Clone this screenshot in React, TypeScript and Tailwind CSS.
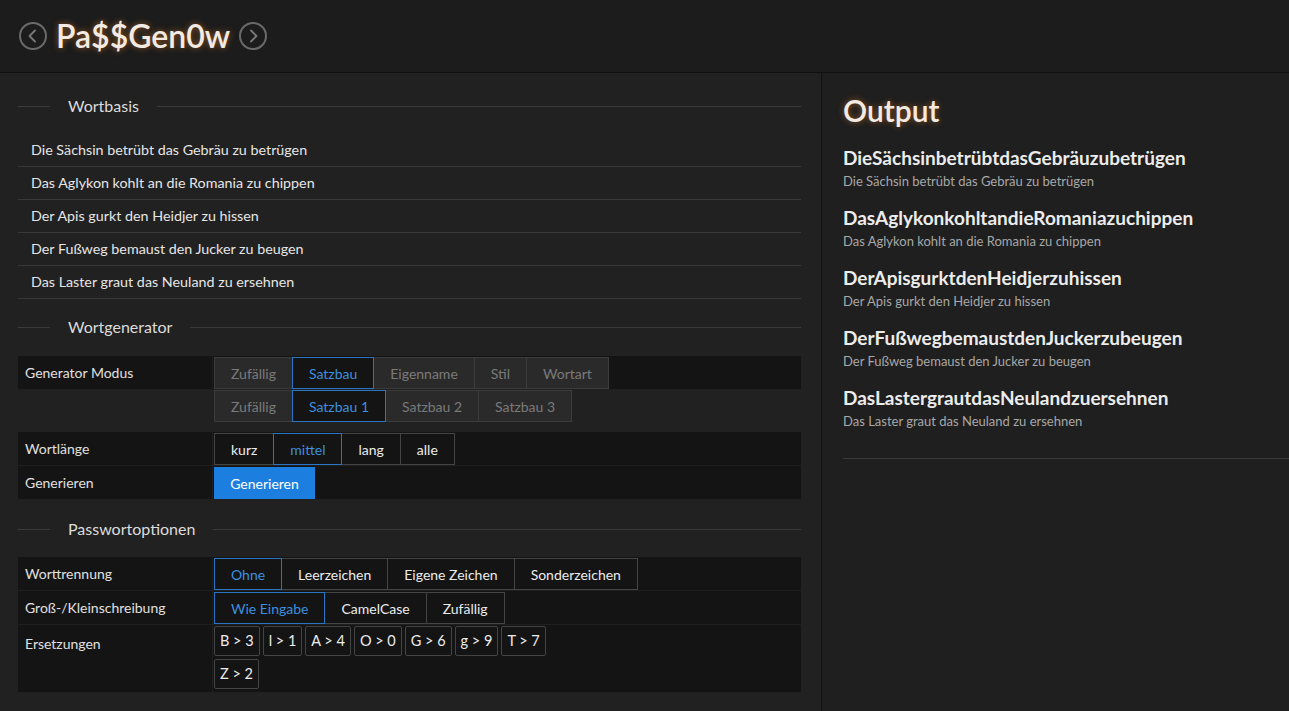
import React from "react";

const sentences = [
  "Die Sächsin betrübt das Gebräu zu betrügen",
  "Das Aglykon kohlt an die Romania zu chippen",
  "Der Apis gurkt den Heidjer zu hissen",
  "Der Fußweg bemaust den Jucker zu beugen",
  "Das Laster graut das Neuland zu ersehnen",
];

function Circle({ dir }: { dir: "l" | "r" }) {
  return (
    <svg width="30" height="30" viewBox="0 0 30 30">
      <circle cx="15" cy="15" r="13" fill="none" stroke="#6a6a6a" strokeWidth="2" />
      {dir === "l" ? (
        <path d="M17 9.5 L11.5 15 L17 20.5" fill="none" stroke="#7a7a7a" strokeWidth="1.8" strokeLinecap="round" strokeLinejoin="round" />
      ) : (
        <path d="M13 9.5 L18.5 15 L13 20.5" fill="none" stroke="#7a7a7a" strokeWidth="1.8" strokeLinecap="round" strokeLinejoin="round" />
      )}
    </svg>
  );
}

function Legend({ title }: { title: string }) {
  return (
    <div className="flex items-center h-[24px]">
      <div className="w-[32px] h-px bg-[#3a3a3a]" />
      <div className="px-[18px] text-[16px] text-[#dcdcdc] leading-[24px]">{title}</div>
      <div className="flex-1 h-px bg-[#3a3a3a]" />
    </div>
  );
}

type Btn = { label: string; sel?: boolean };

function Group({ items, variant }: { items: Btn[]; variant: "dis" | "norm" }) {
  return (
    <div className="flex">
      {items.map((b, i) => {
        let cls = "";
        if (b.sel) cls = "border-[#2a74c4] text-[#3d8fdf] bg-[#141414] relative z-10";
        else if (variant === "dis") cls = "border-[#3c3c3c] text-[#7a7a7a] bg-[#2a2a2a]";
        else cls = "border-[#444] text-[#ececec] bg-[#141414]";
        return (
          <div
            key={i}
            className={`h-[32px] flex items-center px-[16px] border text-[14px] whitespace-nowrap ${i > 0 ? "-ml-px" : ""} ${cls}`}
          >
            {b.label}
          </div>
        );
      })}
    </div>
  );
}

function Row({ label, children, h = "h-[34px]", top = false }: { label: string; children: React.ReactNode; h?: string; top?: boolean }) {
  return (
    <div className={`flex bg-[#141414] ${h} border-b border-[#1f1f1f]`}>
      <div className={`w-[195px] border-r border-[#1f1f1f] px-[7px] text-[14px] text-[#e0e0e0] flex ${top ? "items-start pt-[8px]" : "items-center"}`}>
        {label}
      </div>
      <div className="flex-1 pl-[1px] pt-px">{children}</div>
    </div>
  );
}

export default function App() {
  return (
    <div className="h-[711px] overflow-hidden bg-[#212121] font-['Lato',sans-serif] flex flex-col">
      <header className="h-[73px] shrink-0 bg-[#1c1c1c] border-b border-[#111] flex items-center pl-[18px] pb-[1px]">
        <Circle dir="l" />
        <div className="ml-[8px] mr-[8px] text-[32px] font-semibold text-[#f3ebe3] [text-shadow:0_0_6px_rgba(255,140,40,0.55)] leading-none">
          Pa$$Gen0w
        </div>
        <Circle dir="r" />
      </header>
      <div className="flex flex-1 min-h-0">
        <div className="w-[822px] shrink-0 border-r border-[#121212] pl-[18px] pr-[20px] pt-[21px]">
          <Legend title="Wortbasis" />
          <div className="mt-[16px]">
            {sentences.map((s) => (
              <div key={s} className="h-[33px] border-b border-[#383838] flex items-center px-[13px] text-[14.3px] text-[#e6e6e6]">
                {s}
              </div>
            ))}
          </div>
          <div className="mt-[16px]">
            <Legend title="Wortgenerator" />
          </div>
          <div className="mt-[17px]">
            <Row label="Generator Modus">
              <Group
                variant="dis"
                items={[{ label: "Zufällig" }, { label: "Satzbau", sel: true }, { label: "Eigenname" }, { label: "Stil" }, { label: "Wortart" }]}
              />
            </Row>
            <div className="flex h-[42px]">
              <div className="w-[196px]" />
              <div>
                <Group
                  variant="dis"
                  items={[{ label: "Zufällig" }, { label: "Satzbau 1", sel: true }, { label: "Satzbau 2" }, { label: "Satzbau 3" }]}
                />
              </div>
            </div>
            <Row label="Wortlänge">
              <Group variant="norm" items={[{ label: "kurz" }, { label: "mittel", sel: true }, { label: "lang" }, { label: "alle" }]} />
            </Row>
            <Row label="Generieren">
              <div className="h-[32px] w-[101px] bg-[#1c7fdf] text-white text-[14px] flex items-center justify-center">Generieren</div>
            </Row>
          </div>
          <div className="mt-[17px]">
            <Legend title="Passwortoptionen" />
          </div>
          <div className="mt-[16px]">
            <Row label="Worttrennung">
              <Group
                variant="norm"
                items={[{ label: "Ohne", sel: true }, { label: "Leerzeichen" }, { label: "Eigene Zeichen" }, { label: "Sonderzeichen" }]}
              />
            </Row>
            <Row label="Groß-/Kleinschreibung">
              <Group variant="norm" items={[{ label: "Wie Eingabe", sel: true }, { label: "CamelCase" }, { label: "Zufällig" }]} />
            </Row>
            <Row label="Ersetzungen" h="h-[68px]" top>
              <div className="flex flex-wrap gap-[3px] w-[345px]">
                {["B > 3", "l > 1", "A > 4", "O > 0", "G > 6", "g > 9", "T > 7", "Z > 2"].map((r) => (
                  <div key={r} className="h-[30px] px-[5px] border border-[#444] bg-[#141414] text-[#ececec] text-[14.5px] flex items-center whitespace-nowrap rounded-[2px]">
                    {r}
                  </div>
                ))}
              </div>
            </Row>
          </div>
        </div>
        <div className="flex-1 bg-[#1f1f1f] pl-[21px] pt-[19px]">
          <div className="text-[30px] font-semibold text-[#f3ebe3] [text-shadow:0_0_6px_rgba(255,140,40,0.5)] leading-[36px]">Output</div>
          <div className="mt-[18px] flex flex-col gap-[16px]">
            {sentences.map((s) => (
              <div key={s}>
                <div className="text-[19px] font-bold text-[#ececec] leading-[24px]">{s.replace(/ /g, "")}</div>
                <div className="text-[13px] text-[#a8a8a8] leading-[18px] mt-[2px]">{s}</div>
              </div>
            ))}
          </div>
          <div className="mt-[28px] h-px bg-[#3a3a3a]" />
        </div>
      </div>
    </div>
  );
}
